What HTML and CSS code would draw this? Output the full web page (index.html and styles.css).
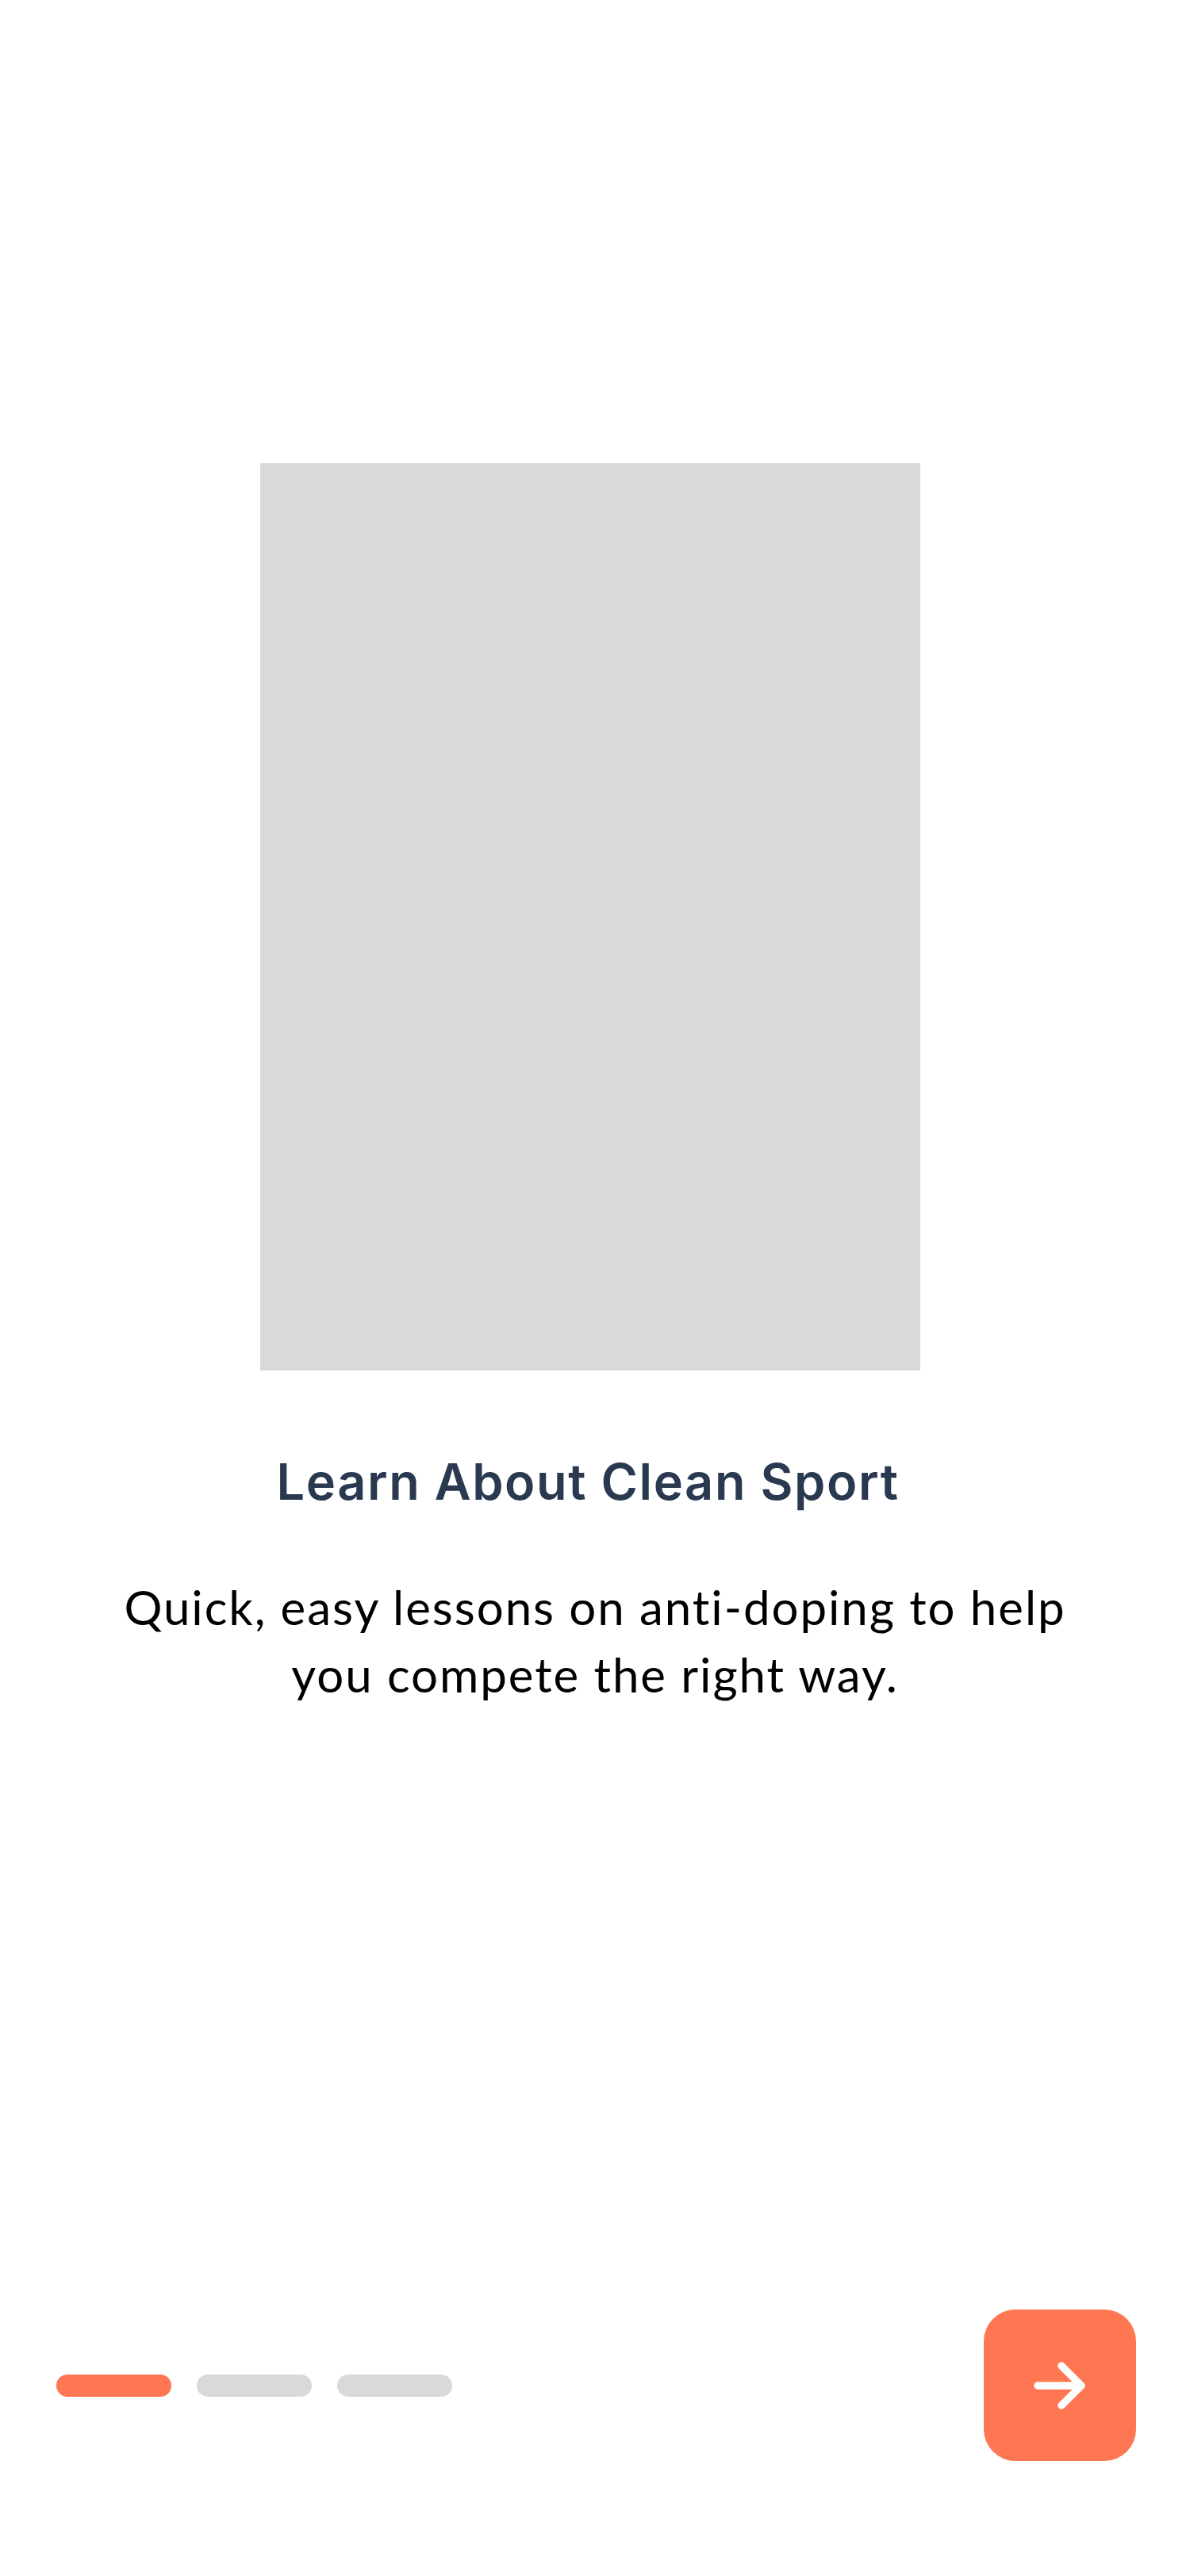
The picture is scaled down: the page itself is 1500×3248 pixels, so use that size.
FILE: index.html
```html
<!DOCTYPE html>
<html lang="en">
<head>
<meta charset="utf-8">
<title>Learn About Clean Sport</title>
<link rel="stylesheet" href="styles.css">
</head>
<body>
<main class="screen">
  <div class="hero" aria-hidden="true"></div>
  <h1 class="title">Learn About Clean Sport</h1>
  <p class="lead">Quick, easy lessons on anti-doping to help you compete the right way.</p>
  <footer class="footer">
    <div class="dots">
      <span class="dot dot-active"></span>
      <span class="dot"></span>
      <span class="dot"></span>
    </div>
    <button class="next" type="button" aria-label="Next">
      <svg class="next-icon" viewBox="0 0 96 96" width="96" height="96">
        <path d="M20 48 H75 M50 23 L75 48 L50 73" fill="none" stroke="#fff" stroke-width="9.5" stroke-linecap="round" stroke-linejoin="round"/>
      </svg>
    </button>
  </footer>
</main>
</body>
</html>
```

FILE: styles.css
```css
html, body {
  margin: 0;
  padding: 0;
  background: #ffffff;
}

.screen {
  box-sizing: border-box;
  height: 3248px;
  width: 1500px;
  display: flex;
  flex-direction: column;
  align-items: center;
  padding-top: 584px;
}

.hero {
  width: 832px;
  height: 1144px;
  background: #d9d9d9;
  margin-right: 12px;
  flex-shrink: 0;
}

.title {
  margin: 100px 18px 0 0;
  font-family: Inter, "Liberation Sans", sans-serif;
  font-weight: 600;
  font-size: 63px;
  line-height: 80px;
  letter-spacing: 1.6px;
  color: #2a3850;
  text-align: center;
}

.lead {
  margin: 76px 0 0;
  width: 1210px;
  font-family: Lato, "Liberation Sans", sans-serif;
  font-weight: 400;
  font-size: 60px;
  line-height: 85px;
  letter-spacing: 1.95px;
  color: #000000;
  text-align: center;
}

.footer {
  margin-top: auto;
  align-self: stretch;
  display: flex;
  justify-content: space-between;
  align-items: center;
  padding: 0 68px 145px 71px;
}

.dots {
  display: flex;
  gap: 32px;
}

.dot {
  display: block;
  width: 145px;
  height: 28px;
  border-radius: 14px;
  background: #d9d9d9;
}

.dot-active {
  background: #ff7652;
}

.next {
  width: 192px;
  height: 191px;
  border: none;
  border-radius: 40px;
  background: #ff7652;
  display: flex;
  align-items: center;
  justify-content: center;
  padding: 0;
  cursor: pointer;
}

.next-icon {
  display: block;
}
```
